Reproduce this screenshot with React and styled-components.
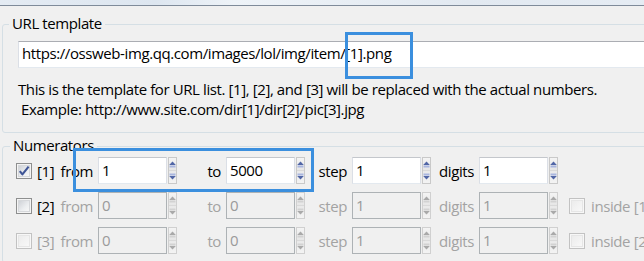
import React from 'react';
import styled, { createGlobalStyle } from 'styled-components';

const GlobalStyle = createGlobalStyle`
  html, body {
    margin: 0;
    padding: 0;
    background: #f0f0f0;
    overflow: hidden;
  }
  * {
    box-sizing: border-box;
  }
`;

const Page = styled.div`
  position: relative;
  width: 100%;
  height: 261px;
  overflow: hidden;
  background: #f0f0f0;
  font-family: 'Segoe UI', 'Open Sans', 'Noto Sans', sans-serif;
  font-size: 15px;
  letter-spacing: -0.4px;
  color: #000;
`;

const Content = styled.div`
  width: 780px;
`;

const TitleStrip = styled.div`
  height: 6px;
  background: linear-gradient(90deg, #e4ebf3 0%, #dde6f0 20%, #eef3f8 30%, #e2e9f1 60%, #e8eef5 100%);
  border-bottom: 1px solid #7f8b9a;
`;

const Panel = styled.div`
  padding: 7px 0 0 2px;
`;

const Group = styled.fieldset`
  margin: ${({ $gap }) => $gap}px 0 0 0;
  padding: 0;
  border: 1px solid #d5dfe5;
  border-radius: 3px;
  min-width: 0;
`;

const Legend = styled.legend`
  margin-left: ${({ $offset }) => $offset}px;
  padding: 0 3px 2px 3px;
  line-height: 20px;
`;

const GroupBody = styled.div`
  padding: ${({ $pad }) => $pad};
`;

const UrlInput = styled.input`
  display: block;
  width: 720px;
  height: 27px;
  margin: 0;
  padding: 0 0 3px 3px;
  font: inherit;
  letter-spacing: inherit;
  line-height: 22px;
  color: #000;
  background: #fff;
  border: 1px solid #dbdfe6;
  border-top-color: #abadb3;
  border-bottom-color: #e3e9ef;
  border-radius: 0;
  outline: none;
`;

const Description = styled.div`
  margin-top: 11px;
  line-height: 20px;
`;

const DescLine = styled.div`
  padding-left: ${({ $indent }) => $indent || 0}px;
  white-space: nowrap;
`;

const Row = styled.div`
  display: flex;
  align-items: center;
  height: 27px;
  margin-bottom: 8px;
  white-space: nowrap;
`;

const Box = styled.span`
  display: inline-flex;
  align-items: center;
  justify-content: center;
  flex: none;
  width: 16px;
  height: 16px;
  border: 1px solid ${({ $disabled }) => ($disabled ? '#c2c2c2' : '#8e8f8f')};
  background: ${({ $disabled }) => ($disabled ? '#f7f7f7' : '#f4f4f4')};
  padding: 1px;
`;

const BoxFill = styled.span`
  position: relative;
  display: block;
  width: 100%;
  height: 100%;
  background: ${({ $disabled }) =>
    $disabled
      ? 'linear-gradient(135deg, #ececec 0%, #f8f8f8 100%)'
      : 'linear-gradient(135deg, #cfd2d7 0%, #eceef0 60%, #f7f7f7 100%)'};
  border: 1px solid ${({ $disabled }) => ($disabled ? '#e6e6e6' : '#d6d8db')};
`;

const CheckMark = styled.svg`
  position: absolute;
  left: -1px;
  top: -1px;
`;

const NumLabel = styled.span`
  flex: none;
  width: 22px;
  padding-left: 5px;
  line-height: 20px;
  color: ${({ $disabled }) => ($disabled ? '#a0a0a0' : '#000')};
`;

const FieldLabel = styled.span`
  flex: none;
  width: ${({ $w }) => $w}px;
  padding-right: 5px;
  text-align: right;
  line-height: 20px;
  color: ${({ $disabled }) => ($disabled ? '#a3a3a3' : '#000')};
`;

const SpinWrap = styled.span`
  display: flex;
  flex: none;
  gap: 1px;
  height: 27px;
`;

const NumInput = styled.input`
  width: 69px;
  height: 27px;
  margin: 0;
  padding: 0 0 2px 3px;
  font: inherit;
  letter-spacing: inherit;
  line-height: 23px;
  border-radius: 0;
  outline: none;
  color: ${({ disabled }) => (disabled ? '#9a9a9a' : '#000')};
  background: ${({ disabled }) => (disabled ? '#f0f0f0' : '#fff')};
  border: 1px solid ${({ disabled }) => (disabled ? '#adb2b5' : '#dbdfe6')};
  ${({ disabled }) => (disabled ? '' : 'border-top-color: #c4c7cc; border-bottom-color: #e3e9ef;')}
  &:disabled {
    -webkit-text-fill-color: #9a9a9a;
    opacity: 1;
  }
`;

const Spinner = styled.span`
  display: flex;
  flex-direction: column;
  width: 9px;
  height: 27px;
  border: 1px solid ${({ $disabled }) => ($disabled ? '#d0d0d0' : '#c9c9c9')};
  background: #fbfbfb;
`;

const SpinButton = styled.span`
  display: flex;
  align-items: ${({ $dir }) => ($dir === 'up' ? 'flex-end' : 'flex-start')};
  justify-content: center;
  flex: 1;
  padding: ${({ $dir }) => ($dir === 'up' ? '0 0 2px 0' : '2px 0 0 0')};
  background: ${({ $dir }) =>
    $dir === 'up'
      ? 'linear-gradient(180deg, #f4f4f4, #e6e6e6)'
      : 'linear-gradient(180deg, #e9e9e9, #f3f3f3)'};
  & + & {
    border-top: 1px solid #d9d9d9;
  }
`;

const InsideOption = styled.span`
  display: flex;
  align-items: center;
  margin-left: 11px;
`;

const InsideLabel = styled.span`
  padding-left: 6px;
  line-height: 20px;
  color: #a3a3a3;
`;

const Highlight = styled.div`
  position: absolute;
  left: ${({ $x }) => $x}px;
  top: ${({ $y }) => $y}px;
  width: ${({ $w }) => $w}px;
  height: ${({ $h }) => $h}px;
  border: 3px solid #3b8fde;
  pointer-events: none;
`;

const Arrow = ({ dir, disabled }) => {
  const main = disabled ? '#a9a9a9' : '#5166a6';
  const band = disabled ? '#d2d2d2' : '#a9b6df';
  return dir === 'up' ? (
    <svg width="7" height="7" viewBox="0 0 7 7">
      <path d="M3.5 0.5 L6.8 4 L0.2 4 Z" fill={main} />
      <rect x="0.5" y="4.5" width="6" height="2" fill={band} />
    </svg>
  ) : (
    <svg width="7" height="7" viewBox="0 0 7 7">
      <rect x="0.5" y="0.5" width="6" height="2" fill={band} />
      <path d="M0.2 3 L6.8 3 L3.5 6.5 Z" fill={main} />
    </svg>
  );
};

const Checkbox = ({ checked, disabled }) => (
  <Box $disabled={disabled}>
    <BoxFill $disabled={disabled}>
      {checked && (
        <CheckMark width="12" height="12" viewBox="0 0 12 12">
          <path
            d="M1.8 6.2 L4.4 9.4 L10.6 1.6"
            fill="none"
            stroke="#3f5596"
            strokeWidth="2.1"
            strokeLinejoin="round"
          />
        </CheckMark>
      )}
    </BoxFill>
  </Box>
);

const SpinField = ({ value, disabled }) => (
  <SpinWrap>
    <NumInput defaultValue={value} disabled={disabled} readOnly />
    <Spinner $disabled={disabled}>
      <SpinButton $dir="up">
        <Arrow dir="up" disabled={disabled} />
      </SpinButton>
      <SpinButton $dir="down">
        <Arrow dir="down" disabled={disabled} />
      </SpinButton>
    </Spinner>
  </SpinWrap>
);

const numerators = [
  { id: 1, checked: true, from: '1', to: '5000', step: '1', digits: '1' },
  { id: 2, checked: false, from: '0', to: '0', step: '1', digits: '1', inside: '[1]' },
  { id: 3, checked: false, from: '0', to: '0', step: '1', digits: '1', inside: '[2]', locked: true },
];

const NumeratorRow = ({ item }) => {
  const off = !item.checked;
  return (
    <Row>
      <Checkbox checked={item.checked} disabled={item.locked} />
      <NumLabel $disabled={item.locked}>[{item.id}]</NumLabel>
      <FieldLabel $w={44} $disabled={off}>from</FieldLabel>
      <SpinField value={item.from} disabled={off} />
      <FieldLabel $w={49} $disabled={off}>to</FieldLabel>
      <SpinField value={item.to} disabled={off} />
      <FieldLabel $w={47} $disabled={off}>step</FieldLabel>
      <SpinField value={item.step} disabled={off} />
      <FieldLabel $w={48} $disabled={off}>digits</FieldLabel>
      <SpinField value={item.digits} disabled={off} />
      {item.inside && (
        <InsideOption>
          <Checkbox disabled />
          <InsideLabel>inside {item.inside}</InsideLabel>
        </InsideOption>
      )}
    </Row>
  );
};

export default function App() {
  return (
    <Page>
      <GlobalStyle />
      <Content>
        <TitleStrip />
        <Panel>
          <Group $gap={0}>
            <Legend $offset={6}>URL template</Legend>
            <GroupBody $pad="6px 0 13px 15px">
              <UrlInput defaultValue="https://ossweb-img.qq.com/images/lol/img/item/[1].png" readOnly />
              <Description>
                <DescLine>
                  This is the template for URL list. [1], [2], and [3] will be replaced with the actual numbers.
                </DescLine>
                <DescLine $indent={3}>Example: http://www.site.com/dir[1]/dir[2]/pic[3].jpg</DescLine>
              </Description>
            </GroupBody>
          </Group>
          <Group $gap={2}>
            <Legend $offset={7}>Numerators</Legend>
            <GroupBody $pad="0 0 0 13px">
              {numerators.map((item) => (
                <NumeratorRow key={item.id} item={item} />
              ))}
            </GroupBody>
          </Group>
        </Panel>
      </Content>
      <Highlight $x={345} $y={32} $w={68} $h={47} />
      <Highlight $x={73} $y={148} $w={241} $h={44} />
    </Page>
  );
}
